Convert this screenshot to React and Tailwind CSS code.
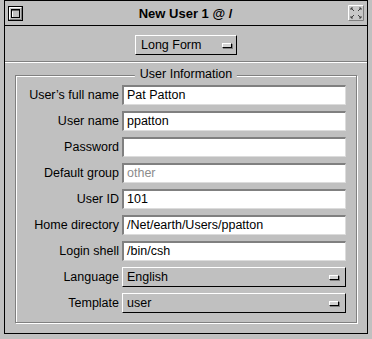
import React from "react";

const rows = [
  { label: "User’s full name", value: "Pat Patton" },
  { label: "User name", value: "ppatton" },
  { label: "Password", value: "" },
  { label: "Default group", value: "other", muted: true },
  { label: "User ID", value: "101" },
  { label: "Home directory", value: "/Net/earth/Users/ppatton" },
  { label: "Login shell", value: "/bin/csh" },
  { label: "Language", value: "English", popup: true },
  { label: "Template", value: "user", popup: true },
];

function PopupMark() {
  return (
    <div className="w-[10px] h-[5px] bg-[#d4d4d4] border-t border-l border-t-white border-l-white border-r border-b border-r-black border-b-black shadow-[1px_1px_0_#808080]" />
  );
}

function Popup({ value, className }) {
  return (
    <div
      className={
        "h-[20px] flex items-center justify-between bg-[#c0c0c0] border-t border-l border-t-white border-l-white border-r border-b border-r-black border-b-black " +
        className
      }
    >
      <span className="leading-none">{value}</span>
      <PopupMark />
    </div>
  );
}

function Row({ label, value, muted, popup }) {
  return (
    <div className="flex items-center h-[20px]">
      <div className="w-[103px] text-right leading-none">{label}</div>
      {popup ? (
        <Popup value={value} className="ml-[3px] w-[224px] pl-[4px] pr-[6px]" />
      ) : (
        <div className="ml-[3px] w-[224px] h-[20px] flex items-center bg-white pl-[3px] border-t-2 border-l-2 border-t-[#808080] border-l-[#808080] border-r border-b border-r-[#dcdcdc] border-b-[#dcdcdc]">
          <span className={"leading-none " + (muted ? "text-[#8c8c8c]" : "text-black")}>
            {value}
          </span>
        </div>
      )}
    </div>
  );
}

function WindowIcon() {
  return (
    <svg width="15" height="15" viewBox="0 0 15 15">
      <rect x="0.5" y="0.5" width="14" height="14" fill="#c0c0c0" stroke="#000" />
      <path d="M1.5 13.5V1.5H13.5" fill="none" stroke="#fff" />
      <path d="M13.5 1.5V13.5H1.5" fill="none" stroke="#808080" />
      <rect x="3.5" y="3.5" width="8" height="8" fill="#c0c0c0" stroke="#000" />
      <path d="M4 4.5H11" stroke="#606060" />
      <path d="M4.5 5.5V11" stroke="#fff" />
    </svg>
  );
}

function ZoomIcon() {
  return (
    <svg width="16" height="16" viewBox="0 0 16 16">
      <rect x="0" y="0" width="16" height="16" fill="#c8c8c8" />
      <path d="M0.5 15.5V0.5H15.5" fill="none" stroke="#fff" />
      <path d="M15.5 0.5V15.5H0.5" fill="none" stroke="#808080" />
      <path d="M3 3L6 6M3 3H5M3 3V5" stroke="#404040" fill="none" />
      <path d="M13 3L10 6M13 3H11M13 3V5" stroke="#404040" fill="none" />
      <path d="M3 13L6 10M3 13H5M3 13V11" stroke="#404040" fill="none" />
      <path d="M13 13L10 10M13 13H11M13 13V11" stroke="#404040" fill="none" />
    </svg>
  );
}

export default function App() {
  return (
    <div className="w-[372px] h-[339px] bg-[#c0c0c0] text-[12.5px] text-black font-['Liberation_Sans',Arial,sans-serif]">
      <div className="ml-[4px] w-[364px] h-[334px] border border-black flex flex-col">
        {/* title bar */}
        <div className="h-[25px] shrink-0 border-b border-black flex items-center justify-between px-[3px]">
          <WindowIcon />
          <span className="font-bold text-[13px] leading-none">New User 1 @ /</span>
          <ZoomIcon />
        </div>
        {/* form switch */}
        <div className="h-[35px] shrink-0 flex justify-center pt-[9px]">
          <Popup value="Long Form" className="w-[102px] pl-[5px] pr-[4px]" />
        </div>
        <div className="h-[2px] shrink-0 border-t border-t-[#808080] border-b border-b-white" />
        {/* user info group */}
        <div className="flex-1 px-[10px] pt-[12px]">
          <div className="relative border border-[#808080] shadow-[inset_1px_1px_0_#fff,1px_1px_0_#fff] h-[248px] pt-[9px]">
            <span className="absolute left-1/2 -translate-x-1/2 -top-[8px] bg-[#c0c0c0] px-[5px] leading-none">
              User Information
            </span>
            <div className="flex flex-col gap-[6px]">
              {rows.map((r, i) => (
                <Row key={i} {...r} />
              ))}
            </div>
          </div>
        </div>
      </div>
    </div>
  );
}
